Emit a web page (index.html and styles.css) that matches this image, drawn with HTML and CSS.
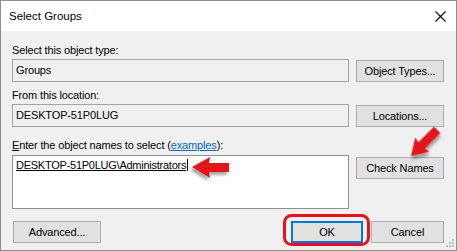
FILE: index.html
```html
<!DOCTYPE html>
<html lang="en">
<head>
    <meta charset="UTF-8">
    <title>Select Groups</title>
    <link rel="stylesheet" href="styles.css">
</head>
<body>
<div class="window">
    <div class="titlebar">
        <span class="title">Select Groups</span>
        <span class="close">
            <svg width="11" height="11" viewBox="0 0 11 11"><path d="M0.5 0.5 L10.5 10.5 M10.5 0.5 L0.5 10.5" stroke="#000" stroke-width="1.1"/></svg>
        </span>
    </div>

    <div class="content">
        <div class="label first">Select this object type:</div>
        <div class="row">
            <div class="field">Groups</div>
            <button class="btn">Object Types...</button>
        </div>

        <div class="label second">From this location:</div>
        <div class="row">
            <div class="field">DESKTOP-51P0LUG</div>
            <button class="btn">Locations...</button>
        </div>

        <div class="label third"><span class="key">E</span>nter the object names to select (<a class="link">examples</a>):</div>
        <div class="row names-row">
            <div class="names"><span class="entry">DESKTOP-51P0LUG\Administrators</span></div>
            <button class="btn check">Check Names</button>
        </div>

        <div class="footer">
            <button class="btn advanced">Advanced...</button>
            <div class="actions">
                <button class="btn btn-default">OK</button>
                <button class="btn cancel">Cancel</button>
            </div>
        </div>
    </div>

    <!-- tutorial marks drawn over the dialog -->
    <svg class="marks" width="457" height="251" viewBox="0 0 457 251">
        <defs>
            <filter id="shade" x="-30%" y="-30%" width="160%" height="160%">
                <feDropShadow dx="-2" dy="3" stdDeviation="1.5" flood-color="#000" flood-opacity="0.35"/>
            </filter>
        </defs>
        <polygon filter="url(#shade)" fill="#e3151f" points="192,167 210,157 209,163 229,163 229,172 209,172 210,178"/>
        <g filter="url(#shade)" transform="translate(411,156) rotate(-45)">
            <polygon fill="#e3151f" points="0,0 16,-10 15,-4.5 37,-4.5 37,4.5 15,4.5 16,10"/>
        </g>
        <rect x="284.5" y="215.5" width="84" height="29" rx="7" fill="none" stroke="#e8101c" stroke-width="3"/>
        <g fill="#bdbdbd">
            <rect x="452" y="245" width="2" height="2"/>
            <rect x="449" y="245" width="2" height="2"/>
            <rect x="446" y="245" width="2" height="2"/>
            <rect x="452" y="242" width="2" height="2"/>
            <rect x="449" y="242" width="2" height="2"/>
            <rect x="452" y="239" width="2" height="2"/>
        </g>
    </svg>
</div>
</body>
</html>
```

FILE: styles.css
```css
body {
    margin: 0;
    font-family: "Liberation Sans", Arial, sans-serif;
    font-size: 11px;
    letter-spacing: -0.15px;
    color: #000;
}

.window {
    position: relative;
    width: 457px;
    height: 251px;
    box-sizing: border-box;
    border: 1px solid #8e8e8e;
    background-color: #f0f0f0;
}

.titlebar {
    height: 30px;
    background-color: #fff;
    display: flex;
    align-items: center;
    justify-content: space-between;
    padding-left: 8px;
}

.title {
    font-size: 11.5px;
    letter-spacing: 0;
}

.close {
    display: flex;
    margin-right: 10px;
}

.content {
    padding: 12px 12px 0 11px;
}

.label {
    height: 14px;
    line-height: 14px;
}

.label.second {
    margin-top: 6px;
}

.label.third {
    margin-top: 11px;
}

.key {
    text-decoration: underline;
}

.link {
    color: #0066cc;
    text-decoration: underline;
}

.row {
    display: flex;
    align-items: flex-start;
    gap: 7px;
    margin-top: 2px;
}

.field {
    flex: 1;
    height: 23px;
    line-height: 21px;
    box-sizing: border-box;
    border: 1px solid #a3a3a3;
    padding-left: 3px;
}

.btn {
    width: 88px;
    height: 22px;
    margin-top: 1px;
    box-sizing: border-box;
    border: 1px solid #adadad;
    background-color: #e1e1e1;
    font-family: inherit;
    font-size: 11px;
    letter-spacing: -0.15px;
    color: #000;
    padding: 0;
}

.names-row {
    margin-top: 3px;
}

.names {
    flex: 1;
    height: 54px;
    box-sizing: border-box;
    border: 1px solid #8f8f8f;
    background-color: #fff;
    padding: 2px 2px 0 3px;
    line-height: 14px;
    letter-spacing: -0.25px;
}

.entry {
    text-decoration: underline;
    border-right: 1px solid #000;
    padding-right: 1px;
}

.check {
    margin-top: 2px;
}

.footer {
    display: flex;
    justify-content: space-between;
    margin-top: 11px;
}

.advanced {
    margin-left: 1px;
}

.actions {
    display: flex;
    gap: 8px;
}

.btn-default {
    width: 72px;
    border: 2px solid #0078d7;
}

.cancel {
    width: 73px;
}

.marks {
    position: absolute;
    top: -1px;
    left: -1px;
    pointer-events: none;
}
```
